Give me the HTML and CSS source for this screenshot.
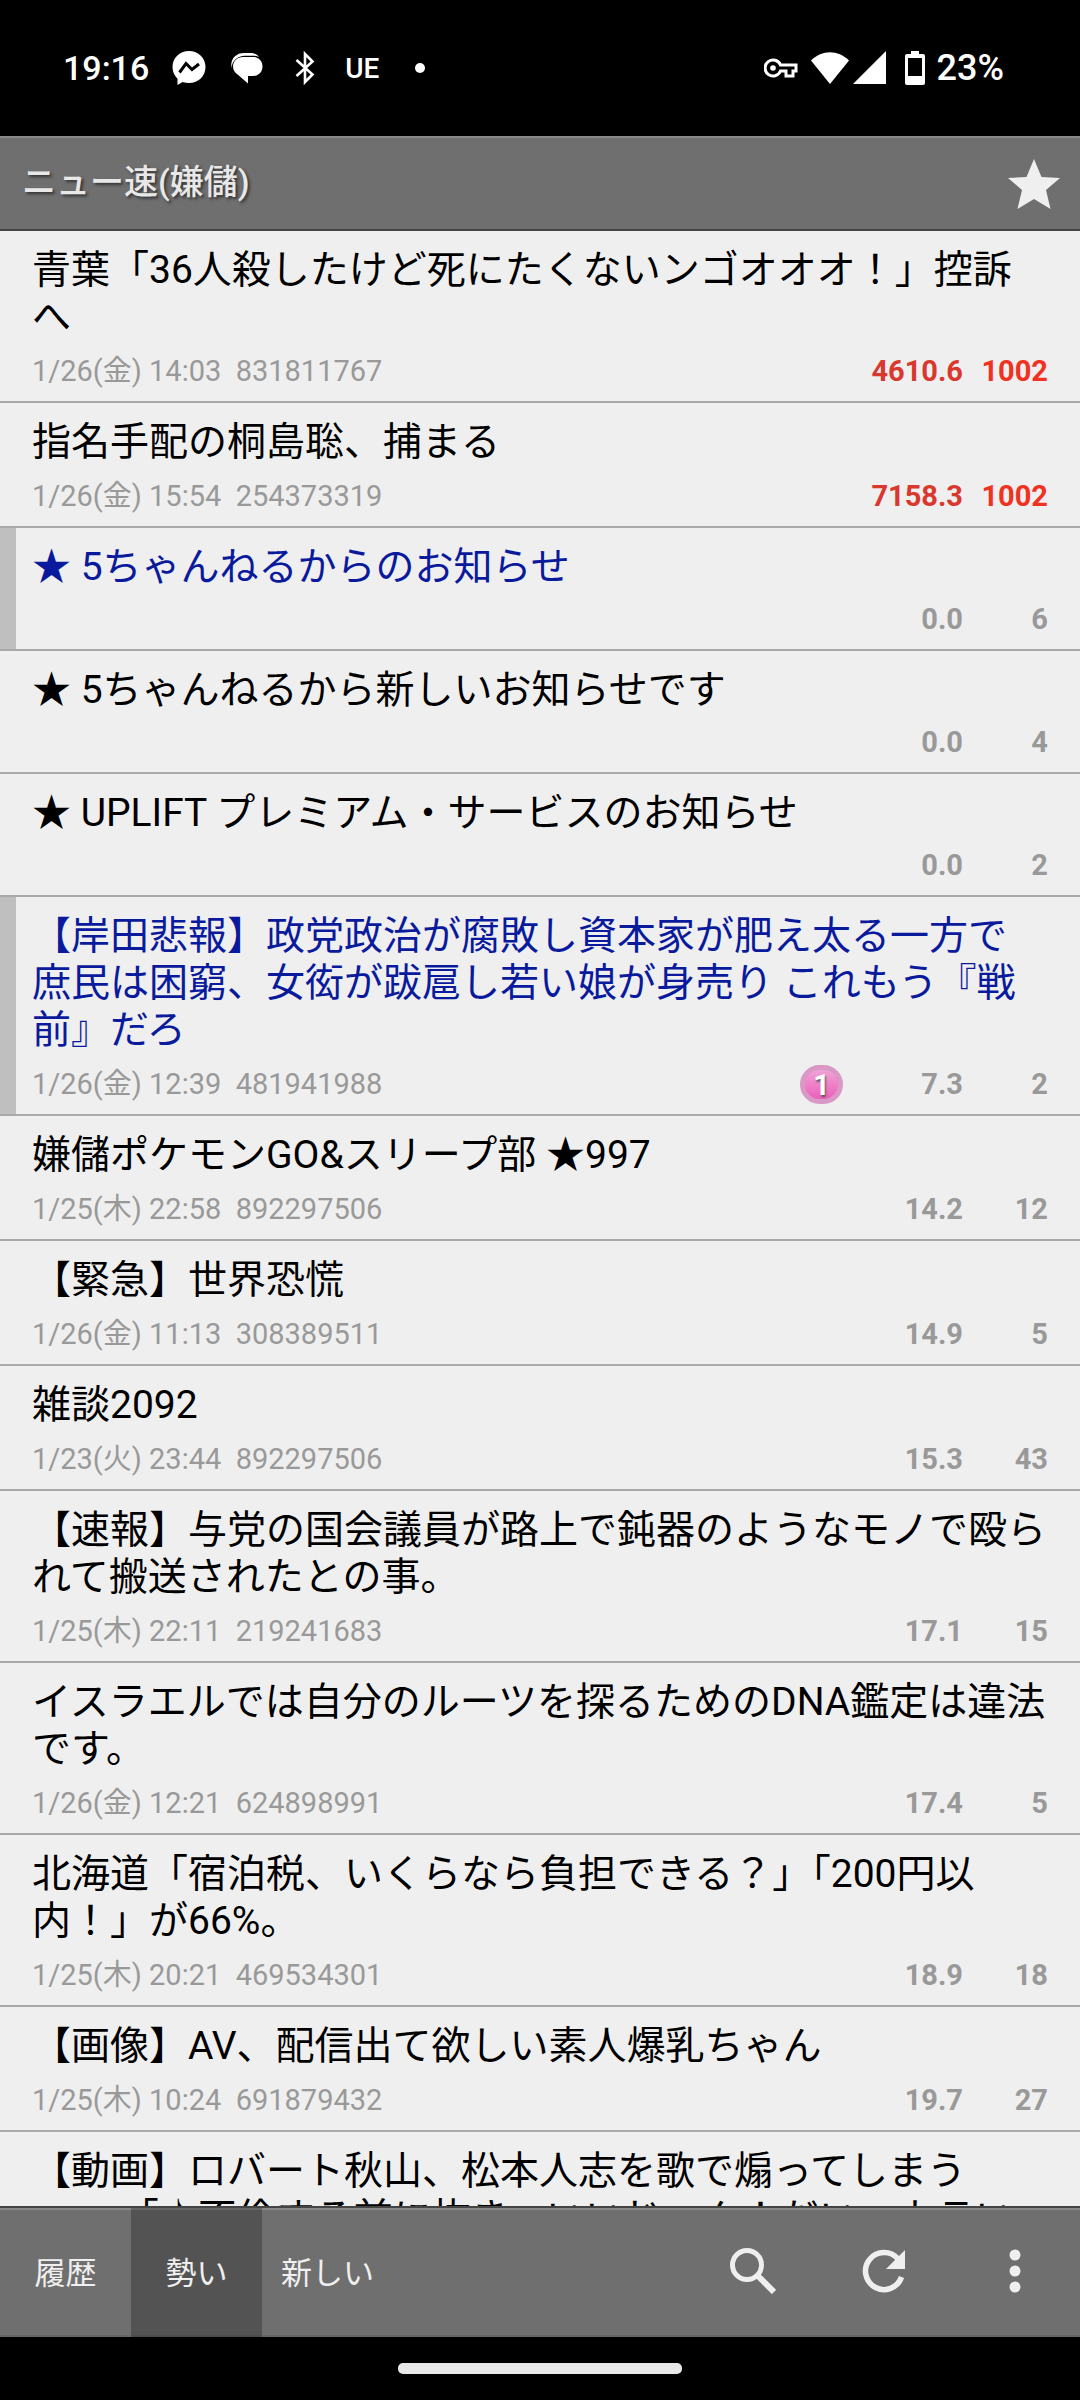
FILE: index.html
```html
<!DOCTYPE html>
<html lang="ja">
<head>
<meta charset="utf-8">
<meta name="viewport" content="width=device-width, initial-scale=1">
<title>ニュー速(嫌儲)</title>
<link rel="stylesheet" href="styles.css">
</head>
<body>
<div class="screen">
  <div class="status">
    <div class="status-left">
      <time class="clock">19:16</time>
      <svg class="s-icon" viewBox="0 0 36 36" aria-hidden="true"><path fill="#fff" d="M18 1C8.400 1 1.500 8 1.500 17c0 4.700 1.900 8.800 5 11.700V35l5.200-2.900c2 .6 4.100.9 6.300.9 9.600 0 16.500-7 16.500-16S27.600 1 18 1z"/><path fill="none" stroke="#000" stroke-width="3" d="M8.500 22.500l6.500-9 6 6 7-5.500"/></svg>
      <svg class="s-icon" viewBox="0 0 36 36" aria-hidden="true"><path fill="#fff" d="M2.500 18C1 9 7 3 15 3h6c4 0 7 1.500 9 4-2-1-4-1.200-6-1.200h-8C8.500 5.800 3 11 2.500 18z"/><path fill="#fff" d="M14 7h10c5.500 0 9.500 4 9.500 9.500S29.500 26 24 26h-5v7.500L8 24c-2.500-2-4-4.500-4-7.500C4 11 8.500 7 14 7z"/></svg>
      <svg class="s-icon" viewBox="0 0 36 36" aria-hidden="true"><path fill="none" stroke="#fff" stroke-width="2.600" d="M9.500 10l16 14.500L18 32V4l7.500 7.500L9.500 26"/></svg>
      <span class="carrier">UE</span>
      <span class="dot"></span>
    </div>
    <div class="status-right">
      <svg class="key" viewBox="0 0 34 20" aria-hidden="true"><path fill="none" stroke="#fff" stroke-width="3" d="M16.500 7H32v6h-3v5h-7v-5h-5.500a8 8 0 1 1 0-6z"/><circle cx="9" cy="10" r="2.800" fill="#fff"/></svg>
      <svg class="wifi" viewBox="0 0 40 34" aria-hidden="true"><path fill="#fff" d="M1 9.500C12-1.500 28-1.500 39 9.500L20 33z"/></svg>
      <svg class="cell" viewBox="0 0 33 34" aria-hidden="true"><path fill="#fff" d="M33 0v33H0z"/></svg>
      <svg class="battery" viewBox="0 0 20 34" aria-hidden="true"><path fill="#fff" fill-rule="evenodd" d="M6 0h8v3h4a2 2 0 0 1 2 2v27a2 2 0 0 1-2 2H2a2 2 0 0 1-2-2V5a2 2 0 0 1 2-2h4zM3 7v18h14V7z"/></svg>
      <span class="percent">23%</span>
    </div>
  </div>

  <header class="bar">
    <h1 class="board">ニュー速(嫌儲)</h1>
    <button class="star" aria-label="お気に入り"><svg viewBox="0 0 52 50" width="52" height="50"><path fill="#efefef" d="M26 0l7.500 18L52 19 38 31l4.500 19L26 40 9.500 50 14 31 0 19l18.500-1z"/></svg></button>
  </header>

  <main class="list">
    <article class="thread"><h2 class="title">青葉「36人殺したけど死にたくないンゴオオオ！」控訴へ</h2><div class="meta"><span class="date">1/26(金) 14:03&nbsp; 831811767</span><b class="speed hot">4610.6</b><b class="count full">1002</b></div></article>
    <article class="thread"><h2 class="title">指名手配の桐島聡、捕まる</h2><div class="meta"><span class="date">1/26(金) 15:54&nbsp; 254373319</span><b class="speed hot">7158.3</b><b class="count full">1002</b></div></article>
    <article class="thread notice read"><h2 class="title">★ 5ちゃんねるからのお知らせ</h2><div class="meta"><b class="speed">0.0</b><b class="count">6</b></div></article>
    <article class="thread notice"><h2 class="title">★ 5ちゃんねるから新しいお知らせです</h2><div class="meta"><b class="speed">0.0</b><b class="count">4</b></div></article>
    <article class="thread notice"><h2 class="title">★ UPLIFT プレミアム・サービスのお知らせ</h2><div class="meta"><b class="speed">0.0</b><b class="count">2</b></div></article>
    <article class="thread read"><h2 class="title">【岸田悲報】政党政治が腐敗し資本家が肥え太る一方で<br>庶民は困窮、女衒が跋扈し若い娘が身売り これもう『戦前』だろ</h2><div class="meta"><span class="date">1/26(金) 12:39&nbsp; 481941988</span><b class="badge">1</b><b class="speed">7.3</b><b class="count">2</b></div></article>
    <article class="thread"><h2 class="title">嫌儲ポケモンGO&amp;スリープ部 ★997</h2><div class="meta"><span class="date">1/25(木) 22:58&nbsp; 892297506</span><b class="speed">14.2</b><b class="count">12</b></div></article>
    <article class="thread"><h2 class="title">【緊急】世界恐慌</h2><div class="meta"><span class="date">1/26(金) 11:13&nbsp; 308389511</span><b class="speed">14.9</b><b class="count">5</b></div></article>
    <article class="thread"><h2 class="title">雑談2092</h2><div class="meta"><span class="date">1/23(火) 23:44&nbsp; 892297506</span><b class="speed">15.3</b><b class="count">43</b></div></article>
    <article class="thread"><h2 class="title">【速報】与党の国会議員が路上で鈍器のようなモノで殴られて搬送されたとの事。</h2><div class="meta"><span class="date">1/25(木) 22:11&nbsp; 219241683</span><b class="speed">17.1</b><b class="count">15</b></div></article>
    <article class="thread"><h2 class="title">イスラエルでは自分のルーツを探るためのDNA鑑定は違法です。</h2><div class="meta"><span class="date">1/26(金) 12:21&nbsp; 624898991</span><b class="speed">17.4</b><b class="count">5</b></div></article>
    <article class="thread"><h2 class="title">北海道「宿泊税、いくらなら負担できる？」「200円以内！」が66%。</h2><div class="meta"><span class="date">1/25(木) 20:21&nbsp; 469534301</span><b class="speed">18.9</b><b class="count">18</b></div></article>
    <article class="thread"><h2 class="title">【画像】AV、配信出て欲しい素人爆乳ちゃん</h2><div class="meta"><span class="date">1/25(木) 10:24&nbsp; 691879432</span><b class="speed">19.7</b><b class="count">27</b></div></article>
    <article class="thread"><h2 class="title">【動画】ロバート秋山、松本人志を歌で煽ってしまう<br>　　 「♪不倫する前に抜き、いいじゃん！だい、カラい</h2></article>
  </main>

  <nav class="toolbar">
    <button class="tab">履歴</button>
    <button class="tab active">勢い</button>
    <button class="tab">新しい</button>
    <span class="spring"></span>
    <button class="tab" aria-label="検索"><svg viewBox="0 0 46 46" width="46" height="46"><circle cx="17" cy="17" r="14.500" fill="none" stroke="#efefef" stroke-width="5"/><path d="M28 28l16 16" stroke="#efefef" stroke-width="6"/></svg></button>
    <button class="tab" aria-label="更新"><svg viewBox="0 0 44 44" width="44" height="44"><path fill="none" stroke="#efefef" stroke-width="5.500" d="M39.500 28a18.500 18.500 0 1 1-3.500-18"/><path fill="#efefef" d="M43 1v19H24z"/></svg></button>
    <button class="tab" aria-label="メニュー"><svg viewBox="0 0 12 44" width="12" height="44"><g fill="#efefef"><circle cx="6" cy="6" r="5.500"/><circle cx="6" cy="22" r="5.500"/><circle cx="6" cy="38" r="5.500"/></g></svg></button>
  </nav>
  <div class="gesture"><span class="pill"></span></div>
</div>
</body>
</html>
```
FILE: styles.css
```css
* { box-sizing: border-box; }
body {
  margin: 0;
  background: #000;
  font-family: Roboto, "Noto Sans CJK JP", sans-serif;
}
button {
  margin: 0;
  padding: 0;
  border: 0;
  background: none;
  font: inherit;
  color: inherit;
}
svg { display: block; }
.screen {
  display: flex;
  flex-direction: column;
  height: 100vh;
}

/* system status bar */
.status {
  flex: none;
  display: flex;
  justify-content: space-between;
  height: 136px;
  padding: 0 76px 0 63px;
  color: #fff;
}
.status-left, .status-right {
  display: flex;
  align-items: center;
}
.clock {
  font-size: 34px;
  font-weight: 500;
}
.percent {
  font-size: 36px;
  font-weight: 500;
}
.s-icon { width: 36px; height: 36px; margin-left: 22px; }
.carrier {
  margin-left: 22px;
  font-size: 28px;
  font-weight: 500;
}
.dot {
  width: 10px;
  height: 10px;
  margin-left: 36px;
  border-radius: 50%;
  background: #fff;
}
.key { width: 34px; height: 20px; }
.wifi { width: 40px; height: 34px; margin-left: 12px; }
.cell { width: 33px; height: 34px; margin-left: 3px; }
.battery { width: 20px; height: 34px; margin: 0 12px 0 19px; }

/* board header */
.bar {
  flex: none;
  display: flex;
  align-items: center;
  justify-content: space-between;
  height: 95px;
  padding: 0 20px 0 22px;
  border-top: 2px solid #888;
  border-bottom: 2px solid #444;
  background: #6f6f6f;
}
.board {
  margin: 0;
  padding-bottom: 4px;
  font-size: 34px;
  line-height: 48px;
  font-weight: 500;
  color: #e8e8e8;
  text-shadow: 2px 2px 3px #333;
}

/* thread list */
.list {
  flex: 1;
  min-height: 0;
  overflow: hidden;
  background: #efefef;
}
.thread {
  padding: 16px 32px 11px;
  border-bottom: 2px solid #a9a9a9;
}
.read { box-shadow: inset 16px 0 #bfbfbf; }
.title {
  margin: 0;
  font-size: 39px;
  line-height: 47px;
  font-weight: 400;
  color: #000;
}
.read .title { color: #0a1a9c; }
.meta {
  display: flex;
  justify-content: flex-end;
  align-items: center;
  height: 38px;
  margin-top: 11px;
  font-size: 29px;
  line-height: 38px;
  color: #999;
}
.notice .meta { margin-top: 9px; }
.date { margin-right: auto; white-space: nowrap; }
.speed { min-width: 120px; text-align: right; }
.count { min-width: 85px; text-align: right; }
.hot { color: #d9382e; }
.full { color: #f03222; }
.badge {
  width: 43px;
  height: 39px;
  border: 5px solid #d998c6;
  border-radius: 20px;
  background: linear-gradient(#f0a3d6, #ec5fbb);
  color: #fff;
  line-height: 30px;
  text-align: center;
  text-shadow: 1px 2px 2px #555;
}

/* bottom toolbar */
.toolbar {
  flex: none;
  display: flex;
  height: 131px;
  border-top: 2px solid #444;
  background: #6f6f6f;
  box-shadow: inset 0 2px #888, inset 0 -2px #666;
  color: #efefef;
  font-size: 31px;
}
.tab {
  display: flex;
  align-items: center;
  justify-content: center;
  width: 131px;
  padding-bottom: 4px;
}
.active { background: rgba(0, 0, 0, 0.25); }
.spring { flex: 1; }
.gesture {
  flex: none;
  display: flex;
  align-items: center;
  justify-content: center;
  height: 63px;
}
.pill {
  width: 284px;
  height: 11px;
  border-radius: 5px;
  background: #e9e9e9;
}
```
